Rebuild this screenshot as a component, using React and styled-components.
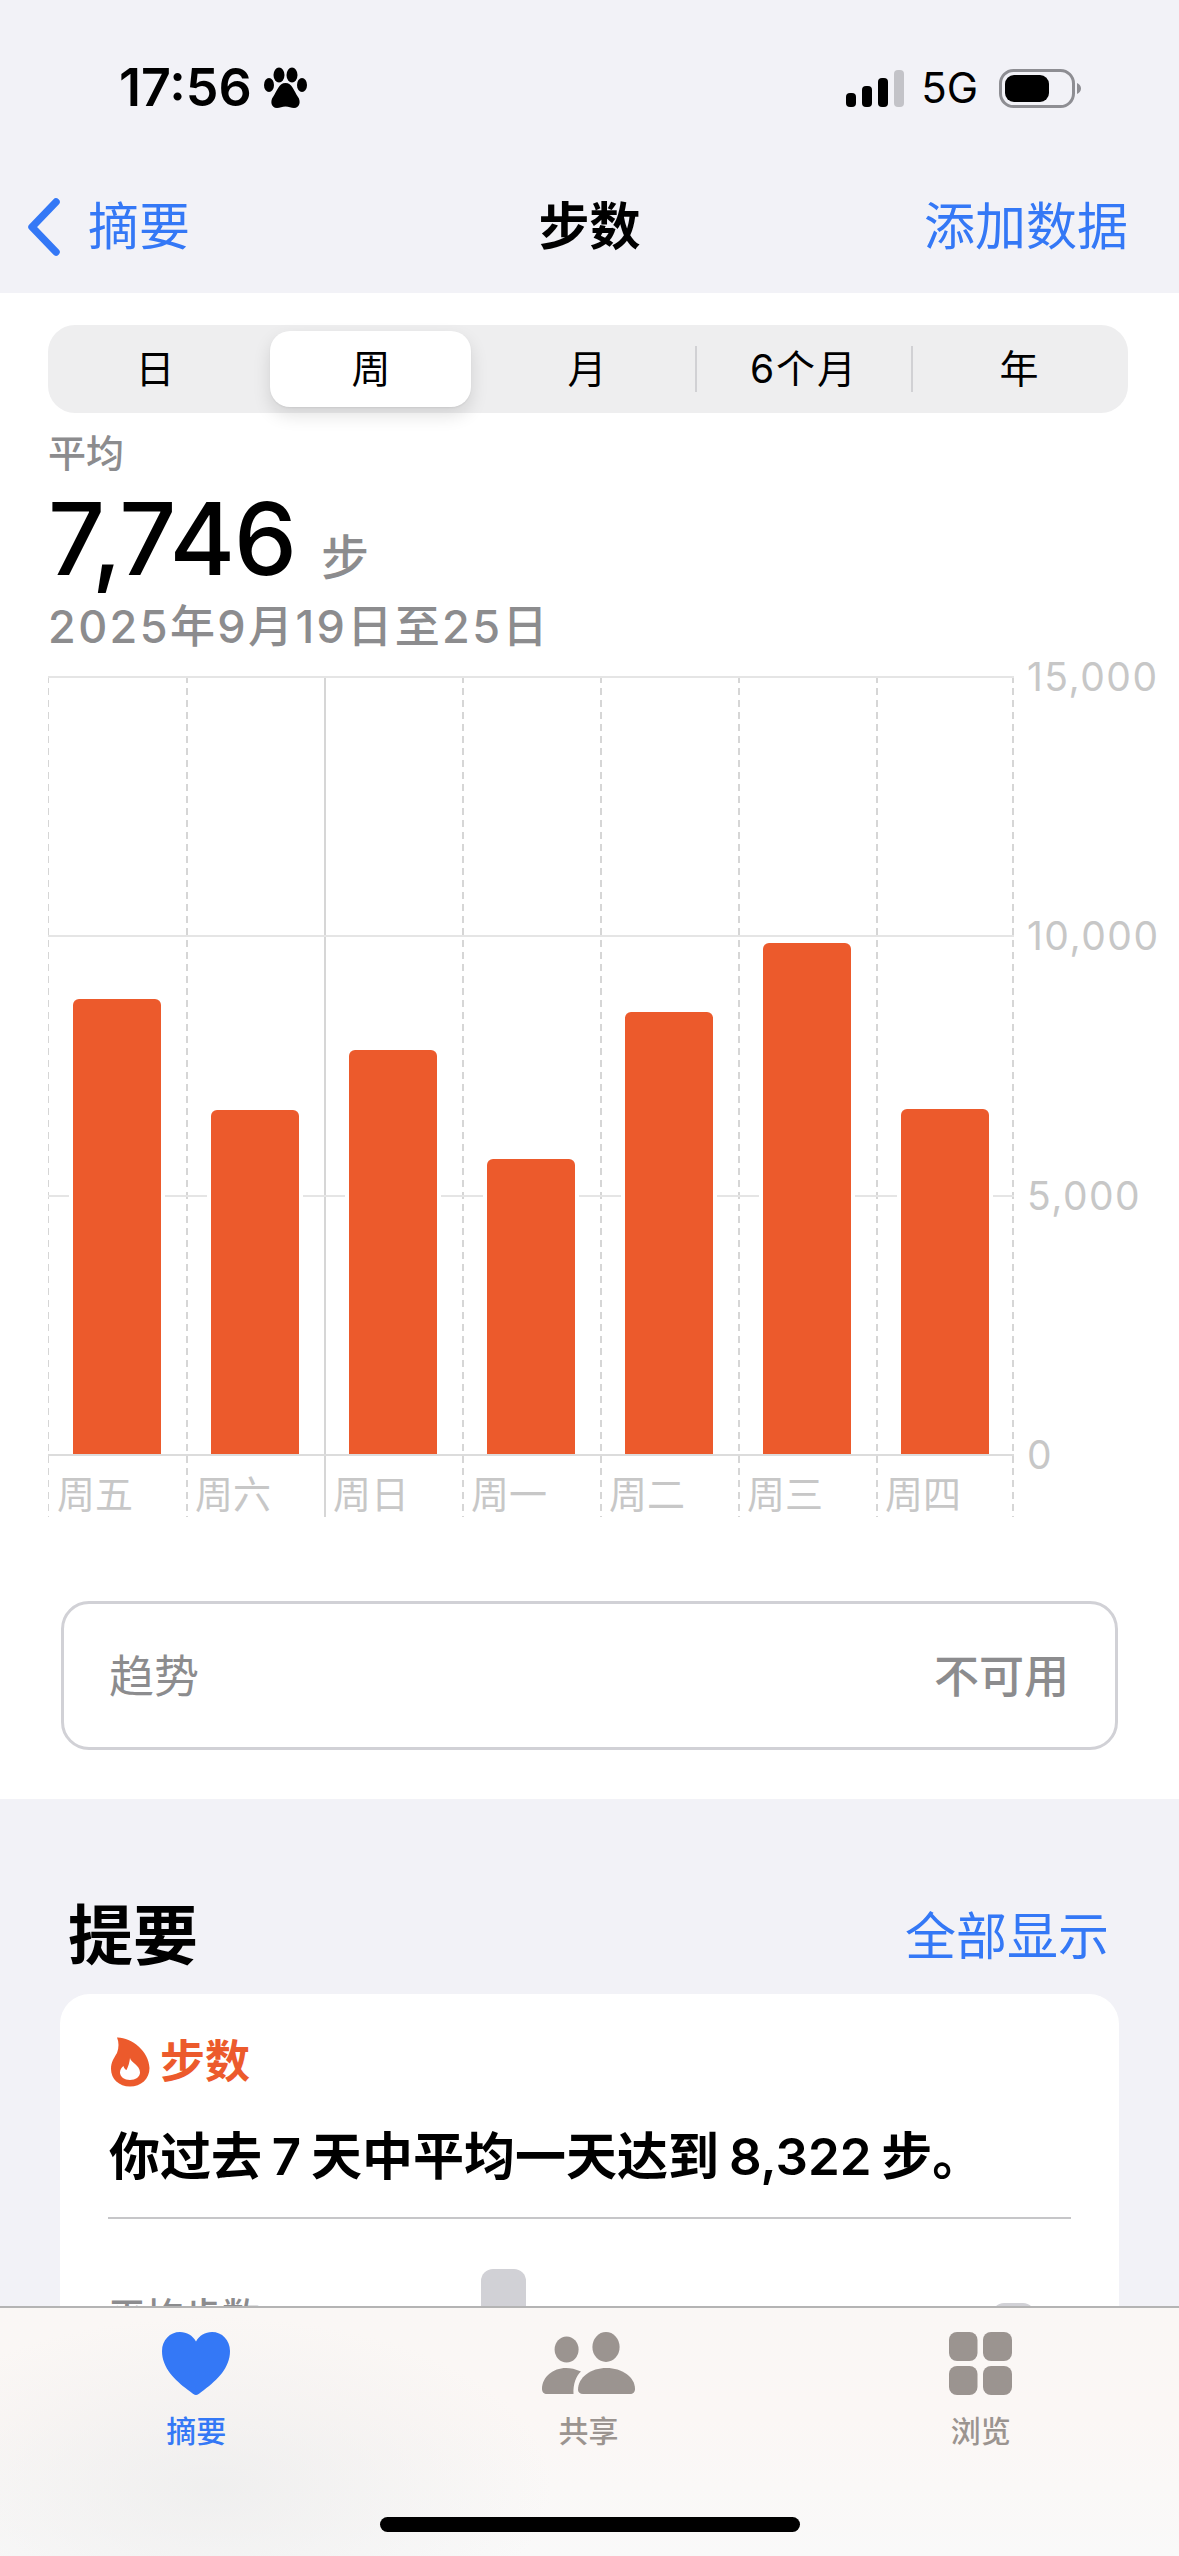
import React from 'react'
import styled, { createGlobalStyle } from 'styled-components'

const BLUE = '#3478f6'
const ORANGE = '#ec5a2c'
const GREY = '#8c8c8e'
const FONT = 'Inter, "Noto Sans CJK SC", sans-serif'

const segments = ['日', '周', '月', '6个月', '年']

const days = [
  { label: '周五', top: 999 },
  { label: '周六', top: 1110 },
  { label: '周日', top: 1050 },
  { label: '周一', top: 1159 },
  { label: '周二', top: 1012 },
  { label: '周三', top: 943 },
  { label: '周四', top: 1109 },
]
const BASELINE = 1454

function PawIcon() {
  return (
    <svg width="43" height="42" viewBox="0 0 43 42">
      <ellipse cx="5" cy="18" rx="5" ry="7" />
      <ellipse cx="38" cy="18" rx="5" ry="7" />
      <ellipse cx="15" cy="8" rx="5.5" ry="7.5" />
      <ellipse cx="28" cy="8" rx="5.5" ry="7.5" />
      <path d="M21.5 16C28 16 30 24 34 30C37 34 36 41 30 41C27 41 25 39.5 21.5 39.5C18 39.5 16 41 13 41C7 41 6 34 9 30C13 24 15 16 21.5 16Z" />
    </svg>
  )
}

function SignalIcon() {
  return (
    <svg width="58" height="37" viewBox="0 0 58 37">
      <rect x="0" y="23" width="10" height="14" rx="4" />
      <rect x="16" y="16" width="10" height="21" rx="4" />
      <rect x="32" y="8" width="10" height="29" rx="4" />
      <rect x="48" y="0" width="10" height="37" rx="4" fill="#c3c3c8" />
    </svg>
  )
}

function BatteryIcon() {
  return (
    <svg width="82" height="39" viewBox="0 0 82 39">
      <rect x="1.5" y="1.5" width="73" height="36" rx="13" fill="none" stroke="#8e8e93" strokeWidth="3" />
      <rect x="6" y="6" width="44" height="27" rx="9" fill="#000" />
      <path d="M78 14C80.5 15 82 17 82 19.5C82 22 80.5 24 78 25Z" fill="#8e8e93" />
    </svg>
  )
}

function FlameIcon() {
  return (
    <svg width="39" height="50" viewBox="0 0 39 50">
      <path
        fillRule="evenodd"
        fill={ORANGE}
        d="M6 0.5C20 0 38 14 38.5 31C38.5 42 30 49.5 19 49.5C8 49.5 0 42 0 32C0 25 3 21 6 16C8 11 8 5 6 0.5ZM19 21C20 26 29 28 29 35.5C29 40 24.5 43 19 43C13.5 43 9 40 9 35.5C9 32.5 10.5 30.5 12.5 29C13 31 14 32.5 15.5 33C17 30 18.5 26 19 21Z"
      />
    </svg>
  )
}

function HeartIcon() {
  return (
    <svg width="68" height="63" viewBox="0 0 68 63">
      <path
        fill={BLUE}
        d="M34 63C32.5 63 30 61 26 58C13 48 0 36 0 19C0 8 8 0 18 0C25 0 30.5 3.5 34 9.5C37.5 3.5 43 0 50 0C60 0 68 8 68 19C68 36 55 48 42 58C38 61 35.5 63 34 63Z"
      />
    </svg>
  )
}

function ShareIcon() {
  return (
    <svg width="93" height="62" viewBox="0 0 93 62" fill="#9b9490">
      <ellipse cx="24.6" cy="17.5" rx="12" ry="13" />
      <ellipse cx="64" cy="15" rx="13.6" ry="15" />
      <path d="M36 58C36 45 49 36 64.5 36C80 36 93 45 93 57C93 60 91 62 88 62L41 62C38 62 36 60 36 58Z" />
      <path d="M0 57C0 45 11 36 24 36C29 36 33 37 39 39.5C34 44 31 52 31.5 62L5 62C2 62 0 60 0 57Z" />
    </svg>
  )
}

function BrowseIcon() {
  return (
    <svg width="63" height="63" viewBox="0 0 63 63" fill="#9b9490">
      <rect x="0" y="0" width="28.5" height="29" rx="8" />
      <rect x="34" y="0" width="29" height="29" rx="8" />
      <rect x="0" y="34" width="28.5" height="29" rx="8" />
      <rect x="34" y="34" width="29" height="29" rx="8" />
    </svg>
  )
}

function App() {
  return (
    <>
      <GlobalStyle />
      <Screen>
        <Header>
          <StatusBar>
            <StatusLeft>
              <Time>17:56</Time>
              <PawIcon />
            </StatusLeft>
            <StatusRight>
              <SignalIcon />
              <Network>5G</Network>
              <BatteryIcon />
            </StatusRight>
          </StatusBar>
          <NavBar>
            <BackLink>
              <svg width="34" height="58" viewBox="0 0 34 58">
                <path d="M29 4L5 29L29 54" fill="none" stroke={BLUE} strokeWidth="7.5" strokeLinecap="round" strokeLinejoin="round" />
              </svg>
              <span>摘要</span>
            </BackLink>
            <NavTitle>步数</NavTitle>
            <NavAction>添加数据</NavAction>
          </NavBar>
        </Header>

        <ChartSection>
          <SegmentBar>
            {segments.map((s, i) => (
              <Segment key={s} $active={i === 1} $divider={i === 3 || i === 4}>
                {i === 1 && <SegmentThumb />}
                <SegmentText>{s}</SegmentText>
              </Segment>
            ))}
          </SegmentBar>

          <AverageLabel>平均</AverageLabel>
          <ValueRow>
            <Value>7,746</Value>
            <Unit>步</Unit>
          </ValueRow>
          <DateRange>2025年9月19日至25日</DateRange>

          <Chart>
            <Plot>
              <GridLayer>
                <HLine />
                <HLine />
                <HLine />
                <HLine $base />
              </GridLayer>
              {days.map((d, i) => (
                <DayColumn key={d.label} $solid={i === 2} $first={i === 0} $last={i === 6}>
                  <BarSlot>
                    <Bar style={{ height: BASELINE - d.top }} />
                  </BarSlot>
                  <DayLabel>{d.label}</DayLabel>
                </DayColumn>
              ))}
            </Plot>
            <YAxis>
              <Tick>15,000</Tick>
              <Tick>10,000</Tick>
              <Tick>5,000</Tick>
              <Tick>0</Tick>
            </YAxis>
          </Chart>

          <TrendCard>
            <TrendLabel>趋势</TrendLabel>
            <TrendValue>不可用</TrendValue>
          </TrendCard>
        </ChartSection>

        <Highlights>
          <SectionHead>
            <SectionTitle>提要</SectionTitle>
            <ShowAll>全部显示</ShowAll>
          </SectionHead>
          <Card>
            <CardTag>
              <FlameIcon />
              <span>步数</span>
            </CardTag>
            <CardText>你过去 7 天中平均一天达到 8,322 步。</CardText>
            <CardDivider />
            <StatRow>
              <StatLabel>平均步数</StatLabel>
              <MiniBar />
              <MiniBar $second />
            </StatRow>
          </Card>
        </Highlights>

        <TabBar>
          <Tab $active>
            <TabIcon><HeartIcon /></TabIcon>
            <TabLabel>摘要</TabLabel>
          </Tab>
          <Tab>
            <TabIcon><ShareIcon /></TabIcon>
            <TabLabel>共享</TabLabel>
          </Tab>
          <Tab>
            <TabIcon><BrowseIcon /></TabIcon>
            <TabLabel>浏览</TabLabel>
          </Tab>
          <HomeIndicator />
        </TabBar>
      </Screen>
    </>
  )
}

const GlobalStyle = createGlobalStyle`
  html, body {
    margin: 0;
    padding: 0;
    background: #f2f2f7;
  }
  * {
    box-sizing: border-box;
  }
`

const Screen = styled.div`
  position: relative;
  width: 1179px;
  height: 2556px;
  overflow: hidden;
  background: #f2f2f7;
  font-family: ${FONT};
  color: #000;
`

const Header = styled.div`
  height: 293px;
  background: #f2f2f7;
`

const StatusBar = styled.div`
  height: 176px;
  display: flex;
  align-items: center;
  justify-content: space-between;
  padding: 0 98px 0 119px;
`

const StatusLeft = styled.div`
  display: flex;
  align-items: center;
  gap: 12px;
`

const Time = styled.span`
  font-size: 52px;
  line-height: 52px;
  font-weight: 600;
`

const StatusRight = styled.div`
  display: flex;
  align-items: center;
  gap: 21px;
`

const Network = styled.span`
  margin-left: -4px;
  font-size: 42px;
  line-height: 44px;
  font-weight: 400;
`

const NavBar = styled.div`
  height: 117px;
  display: flex;
  align-items: center;
  justify-content: space-between;
  padding: 0 51px 15px 24px;
  font-size: 51px;
  line-height: 60px;
`

const BackLink = styled.div`
  display: flex;
  align-items: center;
  gap: 27px;
  width: 427px;
  padding-left: 3px;
  color: ${BLUE};
`

const NavTitle = styled.div`
  font-weight: 700;
`

const NavAction = styled.div`
  width: 400px;
  text-align: right;
  color: ${BLUE};
`

const ChartSection = styled.div`
  background: #fff;
  height: 1506px;
  padding-top: 32px;
`

const SegmentBar = styled.div`
  display: flex;
  height: 88px;
  margin: 0 51px 0 48px;
  border-radius: 27px;
  background: #eeeeef;
`

const Segment = styled.div`
  position: relative;
  flex: 1;
  display: flex;
  align-items: center;
  justify-content: center;

  ${p => p.$divider && `
    &::before {
      content: '';
      position: absolute;
      left: -1px;
      top: 21px;
      height: 46px;
      width: 2px;
      background: #d1d1d4;
    }
  `}
`

const SegmentThumb = styled.div`
  position: absolute;
  top: 6px;
  left: 6px;
  width: 201px;
  height: 76px;
  border-radius: 20px;
  background: #fff;
  box-shadow: 0 8px 18px rgba(0, 0, 0, 0.12), 0 1px 2px rgba(0, 0, 0, 0.06);
`

const SegmentText = styled.span`
  position: relative;
  font-size: 39px;
  line-height: 44px;
  letter-spacing: 2px;
`

const AverageLabel = styled.div`
  margin: 20px 0 0 48px;
  font-size: 38px;
  line-height: 40px;
  font-weight: 500;
  color: ${GREY};
`

const ValueRow = styled.div`
  display: flex;
  align-items: baseline;
  gap: 25px;
  margin: 11px 0 0 48px;
  height: 110px;
`

const Value = styled.span`
  font-size: 100px;
  line-height: 110px;
  font-weight: 500;
  letter-spacing: -1px;
`

const Unit = styled.span`
  font-size: 48px;
  font-weight: 500;
  color: ${GREY};
`

const DateRange = styled.div`
  margin: 8px 0 0 48px;
  font-size: 45px;
  line-height: 50px;
  font-weight: 500;
  letter-spacing: 2.4px;
  color: ${GREY};
`

const Chart = styled.div`
  display: flex;
  margin: 24px 0 0 48px;
`

const Plot = styled.div`
  position: relative;
  width: 966px;
  display: grid;
  grid-template-columns: repeat(7, 1fr);
`

const GridLayer = styled.div`
  position: absolute;
  left: 0;
  right: 0;
  top: 0;
  height: 780px;
  display: flex;
  flex-direction: column;
  justify-content: space-between;
`

const HLine = styled.div`
  position: relative;
  z-index: ${p => (p.$base ? 2 : 0)};
  height: 2px;
  background: ${p => (p.$base ? '#dcdcdc' : '#e5e5e5')};
`

const dash = 'repeating-linear-gradient(to bottom, #d6d6d6 0 7px, transparent 7px 12px)'
const solid = 'linear-gradient(#d6d6d6, #d6d6d6)'

const DayColumn = styled.div`
  display: flex;
  flex-direction: column;
  height: 841px;
  background-image: ${p => (p.$solid ? solid : dash)}${p => (p.$last ? `, ${dash}` : '')};
  background-size: ${p => (p.$first ? '1px' : '2px')} 100%;
  background-position: left top${p => (p.$last ? ', right top' : '')};
  background-repeat: no-repeat;
`

const BarSlot = styled.div`
  height: 778px;
  display: flex;
  align-items: flex-end;
  padding-left: 25px;
`

const Bar = styled.div`
  position: relative;
  z-index: 1;
  width: 88px;
  border-radius: 6px 6px 0 0;
  background: ${ORANGE};
  box-shadow: 0 0 0 4px #fff;
`

const DayLabel = styled.div`
  padding: 18px 0 0 9px;
  font-size: 38px;
  line-height: 44px;
  color: #c7c7c7;
`

const YAxis = styled.div`
  height: 780px;
  display: flex;
  flex-direction: column;
  justify-content: space-between;
  padding-left: 13px;
`

const Tick = styled.div`
  height: 2px;
  line-height: 2px;
  font-size: 39px;
  letter-spacing: 1.5px;
  color: #c7c7c7;
  white-space: nowrap;
`

const TrendCard = styled.div`
  display: flex;
  align-items: center;
  justify-content: space-between;
  height: 149px;
  margin: 84px 61px 0 61px;
  padding: 2px 46px 0 45px;
  border: 3px solid #d1d1d6;
  border-radius: 28px;
  font-size: 45px;
  line-height: 54px;
`

const TrendLabel = styled.span`
  color: ${GREY};
`

const TrendValue = styled.span`
  font-weight: 500;
  color: ${GREY};
`

const Highlights = styled.div`
  padding: 101px 60px 0;
`

const SectionHead = styled.div`
  display: flex;
  align-items: center;
  justify-content: space-between;
  height: 70px;
  padding: 0 10px 0 8px;
`

const SectionTitle = styled.div`
  padding-top: 2px;
  font-size: 65px;
  line-height: 70px;
  font-weight: 700;
`

const ShowAll = styled.div`
  padding-top: 3px;
  font-size: 51px;
  line-height: 60px;
  color: ${BLUE};
`

const Card = styled.div`
  margin-top: 24px;
  height: 600px;
  padding: 43px 48px 0;
  border-radius: 30px;
  background: #fff;
`

const CardTag = styled.div`
  display: flex;
  align-items: center;
  gap: 10px;
  height: 50px;
  padding-left: 3px;
  font-size: 45px;
  line-height: 50px;
  font-weight: 600;
  color: ${ORANGE};
`

const CardText = styled.div`
  margin-top: 40px;
  padding-left: 1px;
  font-size: 51px;
  line-height: 60px;
  font-weight: 600;
  word-spacing: -3px;
  white-space: nowrap;
`

const CardDivider = styled.div`
  margin-top: 30px;
  height: 2px;
  background: #c6c6c8;
`

const StatRow = styled.div`
  display: flex;
  align-items: flex-start;
  margin-top: 50px;
`

const StatLabel = styled.div`
  flex: 0 0 373px;
  margin-top: 25px;
  font-size: 38px;
  line-height: 44px;
  font-weight: 500;
  color: ${GREY};
`

const MiniBar = styled.div`
  width: ${p => (p.$second ? '43px' : '45px')};
  height: 120px;
  margin: ${p => (p.$second ? '34px 0 0 466px' : '0')};
  border-radius: 12px;
  background: #d1d1d6;
`

const TabBar = styled.div`
  position: absolute;
  left: 0;
  right: 0;
  bottom: 0;
  height: 250px;
  display: flex;
  padding: 24px 2px 0 0;
  border-top: 2px solid #b4b4b4;
  background:
    radial-gradient(ellipse 340px 170px at 18% 72%, rgba(236, 236, 236, 0.75), transparent),
    linear-gradient(to bottom, #faf7f5 0%, #fbf7f5 45%, #f9f9f9 100%);
`

const Tab = styled.div`
  flex: 1;
  display: flex;
  flex-direction: column;
  align-items: center;
  color: ${p => (p.$active ? BLUE : '#9b9490')};
`

const TabIcon = styled.div`
  height: 64px;
  display: flex;
  align-items: flex-start;
  justify-content: center;
`

const TabLabel = styled.div`
  margin-top: 17px;
  font-size: 30px;
  line-height: 36px;
  font-weight: 500;
`

const HomeIndicator = styled.div`
  position: absolute;
  left: 380px;
  bottom: 24px;
  width: 420px;
  height: 15px;
  border-radius: 8px;
  background: #000;
`

export default App
